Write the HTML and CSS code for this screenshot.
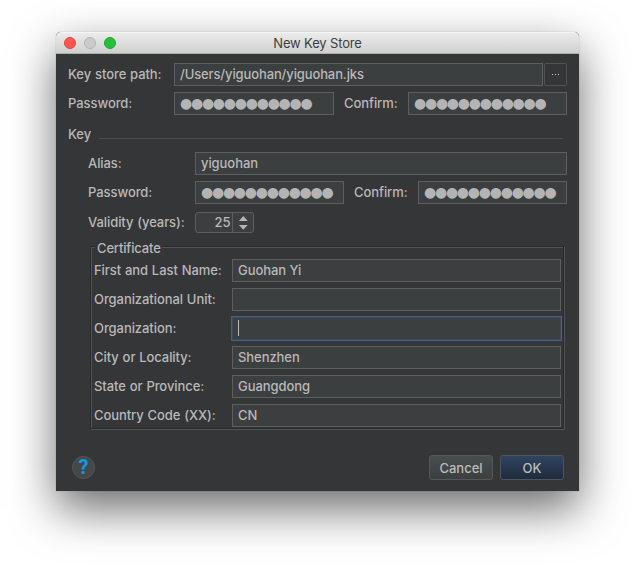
FILE: index.html
```html
<!DOCTYPE html>
<html lang="en">
<head>
<meta charset="utf-8">
<title>New Key Store</title>
<link rel="stylesheet" href="styles.css">
</head>
<body>
<main class="window">
  <header class="titlebar">
    <div class="lights"><i class="light close"></i><i class="light minimize"></i><i class="light zoom"></i></div>
    <h1 class="title">New Key Store</h1>
  </header>
  <form class="content">
    <section class="store">
      <div class="row">
        <label class="label">Key store path:</label>
        <div class="field path">/Users/yiguohan/yiguohan.jks</div>
        <button type="button" class="browse"><i></i><i></i><i></i></button>
      </div>
      <div class="row">
        <label class="label">Password:</label>
        <div class="field secret first">●●●●●●●●●●●●</div>
        <label class="confirm">Confirm:</label>
        <div class="field secret">●●●●●●●●●●●●</div>
      </div>
    </section>
    <div class="separator"><span>Key</span></div>
    <section class="key">
      <div class="row">
        <label class="label">Alias:</label>
        <div class="field">yiguohan</div>
      </div>
      <div class="row">
        <label class="label">Password:</label>
        <div class="field secret">●●●●●●●●●●●●</div>
        <label class="confirm">Confirm:</label>
        <div class="field secret">●●●●●●●●●●●●</div>
      </div>
      <div class="row validity">
        <label class="label">Validity (years):</label>
        <div class="spinner">
          <span class="value">25</span>
          <svg class="arrows" width="20" height="19" viewBox="0 0 20 19"><path d="M6 8h9l-4.500-5zM6 12h9l-4.500 5z" fill="#b4b4b4"/></svg>
        </div>
      </div>
    </section>
    <section class="certificate">
      <h2 class="legend">Certificate</h2>
      <div class="row"><label class="label">First and Last Name:</label><div class="field">Guohan Yi</div></div>
      <div class="row"><label class="label">Organizational Unit:</label><div class="field"></div></div>
      <div class="row"><label class="label">Organization:</label><div class="field focused"><i class="caret"></i></div></div>
      <div class="row"><label class="label">City or Locality:</label><div class="field">Shenzhen</div></div>
      <div class="row"><label class="label">State or Province:</label><div class="field">Guangdong</div></div>
      <div class="row"><label class="label">Country Code (XX):</label><div class="field">CN</div></div>
    </section>
    <footer class="actions">
      <button type="button" class="help">?</button>
      <button type="button" class="button">Cancel</button>
      <button type="button" class="button primary">OK</button>
    </footer>
  </form>
</main>
</body>
</html>
```
FILE: styles.css
```css
* { box-sizing: border-box; }
body {
  margin: 0;
  height: 571px;
  overflow: hidden;
  background: #fff;
  padding: 32px 56px 0;
  font: 450 13px/16px Inter, "Liberation Sans", sans-serif;
  letter-spacing: -.07px;
  color: #b8b8b8;
}
.window {
  width: 523px;
  height: 459px;
  border-radius: 5px 5px 0 0;
  background: #353638;
  box-shadow: 0 0 1px rgba(0,0,0,.45), 0 18px 46px rgba(0,0,0,.58);
}
.titlebar {
  display: grid;
  grid-template-columns: 80px 1fr 80px;
  align-items: center;
  height: 22px;
  border-radius: 5px 5px 0 0;
  background: linear-gradient(#ebebeb, #d0d0d0);
  border-top: 1px solid #f5f5f5;
  border-bottom: 1px solid #a9afad;
}
.lights { display: flex; gap: 8px; padding-left: 8px; }
.light { width: 12px; height: 12px; border-radius: 50%; border: 1px solid; }
.close { background: #ff5550; border-color: #e2443f; }
.minimize { background: #cbcbcb; border-color: #b4b4b4; }
.zoom { background: #24c138; border-color: #1aab2c; }
.title {
  margin: 0;
  text-align: center;
  font-size: 13px;
  font-weight: 400;
  line-height: 18px;
  letter-spacing: -.15px;
  color: #3e3e3e;
}
.content { padding: 9px 12px 0; }
.row { display: flex; align-items: center; height: 23px; margin-bottom: 6px; white-space: nowrap; }
.label, .confirm { flex: none; padding-bottom: 1px; word-spacing: .5px; }
.store .label { width: 106px; }
.field {
  flex: 1;
  display: flex;
  align-items: center;
  min-width: 0;
  height: 23px;
  padding: 0 5px 1px;
  border: 1px solid #5c5e60;
  background: #3c3f40;
  white-space: nowrap;
}
.path { letter-spacing: -.12px; }
.first { flex: 0 0 160px; }
.secret { font: 14px/16px "DejaVu Sans", sans-serif; letter-spacing: -1.26px; color: #b4b4b4; }
.confirm { width: 74px; padding-left: 10px; }
.browse {
  width: 23px;
  height: 23px;
  margin-left: 1px;
  padding: 0;
  display: flex;
  align-items: center;
  justify-content: center;
  gap: 2px;
  border: 1px solid #505254;
  border-radius: 2px;
  background: #353638;
}
.browse i { width: 1px; height: 1px; background: #ccc; }
.separator { display: flex; height: 16px; margin: 11px 4px 10px 0; gap: 8px; }
.separator::after { content: ""; flex: 1; height: 1px; margin-top: 12px; background: #4a4c4e; }
.key { padding-left: 20px; }
.key .label { width: 107px; }
.validity { margin-top: 7px; }
.spinner {
  display: flex;
  width: 59px;
  height: 21px;
  border: 1px solid #5c5e60;
  border-radius: 3px;
  background: #3c3f40;
}
.value { width: 38px; padding-right: 2px; border-right: 1px solid #5c5e60; line-height: 19px; text-align: right; }
.certificate {
  width: 474px;
  height: 183px;
  margin: 12px 0 0 22px;
  padding: 0 2px 0 3px;
  border: 1px solid #292a2c;
  box-shadow: 1px 1px 0 #515355, inset 1px 1px 0 #515355;
}
.legend {
  width: 67px;
  height: 16px;
  margin: -7px 0 3px 1px;
  padding-left: 2px;
  background: #353638;
  font: inherit;
  letter-spacing: -.15px;
}
.certificate .label { width: 138px; }
.focused { border-color: #3c4b5c; box-shadow: 0 0 0 1px #40618a; }
.caret { width: 1px; height: 16px; background: #bbb; }
.actions { display: flex; align-items: center; height: 25px; margin: 26px 3px 0 4px; gap: 7px; }
.help {
  width: 23px;
  height: 23px;
  margin-right: auto;
  padding: 0;
  border: 1px solid #535658;
  border-radius: 50%;
  background: #43484a;
  color: #109be4;
  font: bold 20px/21px Roboto, sans-serif;
}
.button {
  width: 64px;
  height: 25px;
  padding: 0;
  border: 1px solid #55585a;
  border-radius: 3px;
  background: linear-gradient(#484d4e, #3b3f40);
  color: #bbb;
  font: inherit;
}
.primary { background: linear-gradient(#304460, #202b3d); border-color: #4d5660; }
```
